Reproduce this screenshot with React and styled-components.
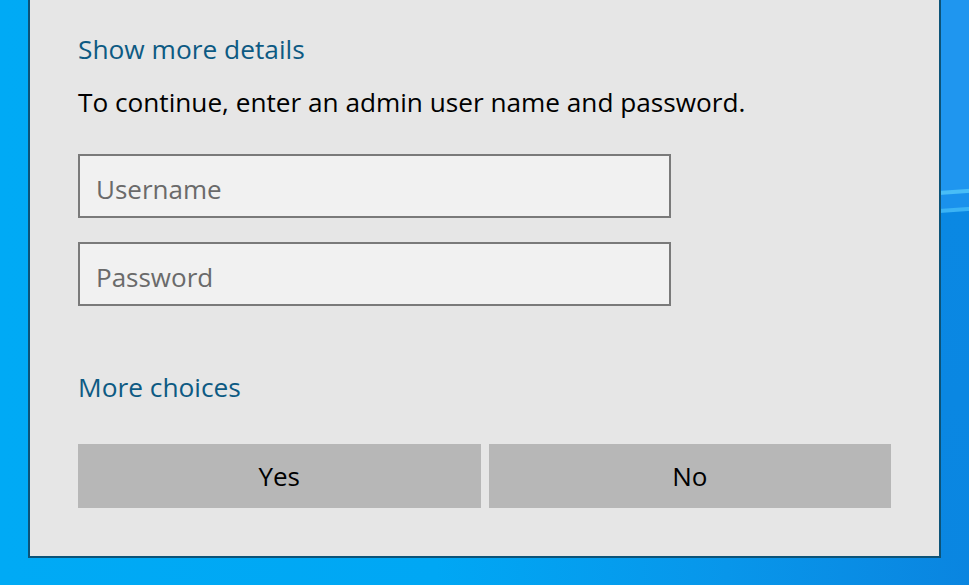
import React from "react";
import styled, { createGlobalStyle } from "styled-components";

const Global = createGlobalStyle`
  html, body { margin: 0; padding: 0; }
  body {
    width: 969px;
    height: 585px;
    overflow: hidden;
    font-family: "Open Sans", "Noto Sans", sans-serif;
  }
  * { box-sizing: border-box; }
`;

const Desktop = styled.div`
  width: 969px;
  height: 585px;
  padding-left: 28px;
  background:
    linear-gradient(176deg,
      #1f96ef 0px, #1f96ef 190px,
      #48bdf7 191px, #48bdf7 194px,
      #1a91ec 195px, #1a91ec 208px,
      #3ab3f5 209px, #3ab3f5 212px,
      #0a88e3 213px, #0a86e1 585px) right top / 30px 560px no-repeat,
    linear-gradient(90deg, #00aaf5 0%, #00a7f4 45%, #0896ea 75%, #0a85e0 100%);
`;

const Dialog = styled.section`
  width: 913px;
  height: 558px;
  background: #e6e6e6;
  border: 2px solid #0c5378;
  border-top: none;
  padding: 31px 48px 48px;
  display: flex;
  flex-direction: column;
`;

const Link = styled.a`
  display: block;
  font-size: 26.3px;
  line-height: 36px;
  color: #0d5a83;
  text-decoration: none;
  cursor: pointer;
  margin-top: ${(p) => p.$mt || 0}px;
`;

const Message = styled.p`
  margin: 17px 0 0;
  font-size: 26.2px;
  line-height: 36px;
  color: #000;
`;

const Field = styled.input`
  display: block;
  width: 593px;
  height: 64px;
  margin-top: ${(p) => p.$mt}px;
  padding: 6px 16px 0;
  border: 2px solid #7a7a7a;
  background: #f1f1f1;
  font-family: inherit;
  font-size: 26px;
  color: #000;
  outline: none;
  &::placeholder { color: #6a6a6a; opacity: 1; }
`;

const Buttons = styled.div`
  margin-top: 39px;
  display: grid;
  grid-template-columns: 1fr 1fr;
  gap: 8px;
`;

const Button = styled.button`
  height: 64px;
  border: none;
  background: #b7b7b7;
  font-family: inherit;
  font-size: 26px;
  color: #000;
  padding: 0;
  cursor: pointer;
`;

export default function App() {
  return (
    <>
      <Global />
      <Desktop>
        <Dialog>
          <Link>Show more details</Link>
          <Message>To continue, enter an admin user name and password.</Message>
          <Field $mt={34} placeholder="Username" />
          <Field $mt={24} type="password" placeholder="Password" />
          <Link $mt={63}>More choices</Link>
          <Buttons>
            <Button>Yes</Button>
            <Button>No</Button>
          </Buttons>
        </Dialog>
      </Desktop>
    </>
  );
}
